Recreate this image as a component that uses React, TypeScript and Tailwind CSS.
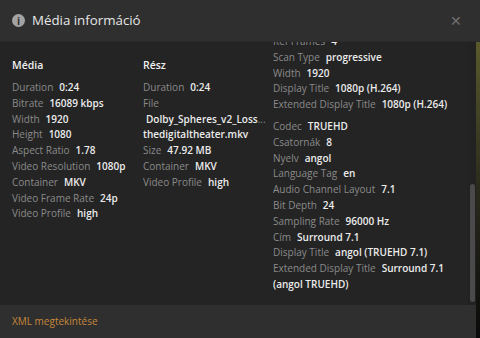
import React from "react";

type Row = { label: string; value: string };

const mediaRows: Row[] = [
  { label: "Duration", value: "0:24" },
  { label: "Bitrate", value: "16089 kbps" },
  { label: "Width", value: "1920" },
  { label: "Height", value: "1080" },
  { label: "Aspect Ratio", value: "1.78" },
  { label: "Video Resolution", value: "1080p" },
  { label: "Container", value: "MKV" },
  { label: "Video Frame Rate", value: "24p" },
  { label: "Video Profile", value: "high" },
];

// 3. oszlop: videó stream (felül kiscrollozva)
const videoStream: Row[] = [
  { label: "Ref Frames", value: "4" },
  { label: "Scan Type", value: "progressive" },
  { label: "Width", value: "1920" },
  { label: "Display Title", value: "1080p (H.264)" },
  { label: "Extended Display Title", value: "1080p (H.264)" },
];

const audioStream: Row[] = [
  { label: "Codec", value: "TRUEHD" },
  { label: "Csatornák", value: "8" },
  { label: "Nyelv", value: "angol" },
  { label: "Language Tag", value: "en" },
  { label: "Audio Channel Layout", value: "7.1" },
  { label: "Bit Depth", value: "24" },
  { label: "Sampling Rate", value: "96000 Hz" },
  { label: "Cím", value: "Surround 7.1" },
  { label: "Display Title", value: "angol (TRUEHD 7.1)" },
];

const InfoRow: React.FC<Row> = ({ label, value }) => (
  <div className="h-[15.8px] leading-[15.8px] whitespace-nowrap">
    <span className="text-[#8a8a8a]">{label}</span>
    <span className="ml-[6px] font-semibold text-[#ececec]">{value}</span>
  </div>
);

const App: React.FC = () => {
  return (
    <div
      className="w-[480px] h-[338px] flex flex-col bg-[#242424] text-[10px] overflow-hidden"
      style={{ fontFamily: '"Open Sans", "Noto Sans", sans-serif' }}
    >
      {/* fejléc */}
      <div className="h-[42px] shrink-0 flex items-center pl-3 pr-[18px] bg-[#2f2f2f] border-b border-[#2a2a2a]">
        <div className="w-[13px] h-[13px] rounded-full bg-[#a3a3a3] flex items-center justify-center text-[#2f2f2f] text-[10px] font-bold leading-none">
          i
        </div>
        <div className="ml-[7px] text-[13.3px] text-[#e6e6e6]">Média információ</div>
        <div className="ml-auto text-[#6f6f6f] text-[14px] leading-none">✕</div>
      </div>

      <div className="flex-1 flex min-h-0">
        <div className="flex-1 flex flex-col min-w-0">
          {/* tartalom */}
          <div className="flex-1 flex min-h-0 pl-3">
            <div className="w-[131px] pt-[15px]">
              <div className="h-4 leading-4 text-[10.5px] font-semibold text-[#f0f0f0] mb-[7px]">Média</div>
              {mediaRows.map((r) => (
                <InfoRow key={r.label} {...r} />
              ))}
            </div>

            <div className="w-[130px] pt-[15px]">
              <div className="h-4 leading-4 text-[10.5px] font-semibold text-[#f0f0f0] mb-[7px]">Rész</div>
              <InfoRow label="Duration" value="0:24" />
              <div className="h-[15.8px] leading-[15.8px] text-[#8a8a8a]">File</div>
              <div className="h-[15.8px] leading-[15.8px] pl-[3px] font-semibold text-[#ececec] whitespace-nowrap">
                Dolby_Spheres_v2_Loss<span className="text-[#8a8a8a] font-normal">...</span>
              </div>
              <div className="h-[15.8px] leading-[15.8px] font-semibold text-[#ececec]">thedigitaltheater.mkv</div>
              <InfoRow label="Size" value="47.92 MB" />
              <InfoRow label="Container" value="MKV" />
              <InfoRow label="Video Profile" value="high" />
            </div>

            {/* görgethető oszlop */}
            <div className="flex-1 overflow-hidden">
              <div className="-mt-[8px]">
                {videoStream.map((r, i) => (
                  <InfoRow key={i} {...r} />
                ))}
                <div className="h-[6px]" />
                {audioStream.map((r, i) => (
                  <InfoRow key={i} {...r} />
                ))}
                <InfoRow label="Extended Display Title" value="Surround 7.1" />
                <div className="h-[15.8px] leading-[15.8px] font-semibold text-[#ececec]">(angol TRUEHD)</div>
              </div>
            </div>

            {/* görgetősáv */}
            <div className="w-2 shrink-0 bg-[#222222] flex flex-col pt-[142px] pb-[3px] items-center">
              <div className="w-[5px] flex-1 rounded-full bg-[#4a4a4a]" />
            </div>
          </div>

          {/* lábléc */}
          <div className="h-[33px] shrink-0 flex items-center px-3 bg-[#2f2f2f]">
            <span className="text-[#c6873a] text-[10px]">XML megtekintése</span>
          </div>
        </div>

        {/* háttérkép széle */}
        <div className="w-1 shrink-0 bg-gradient-to-b from-[#5a5a2c] via-[#2a2a1c] to-[#0a0a0a]" />
      </div>
    </div>
  );
};

export default App;
